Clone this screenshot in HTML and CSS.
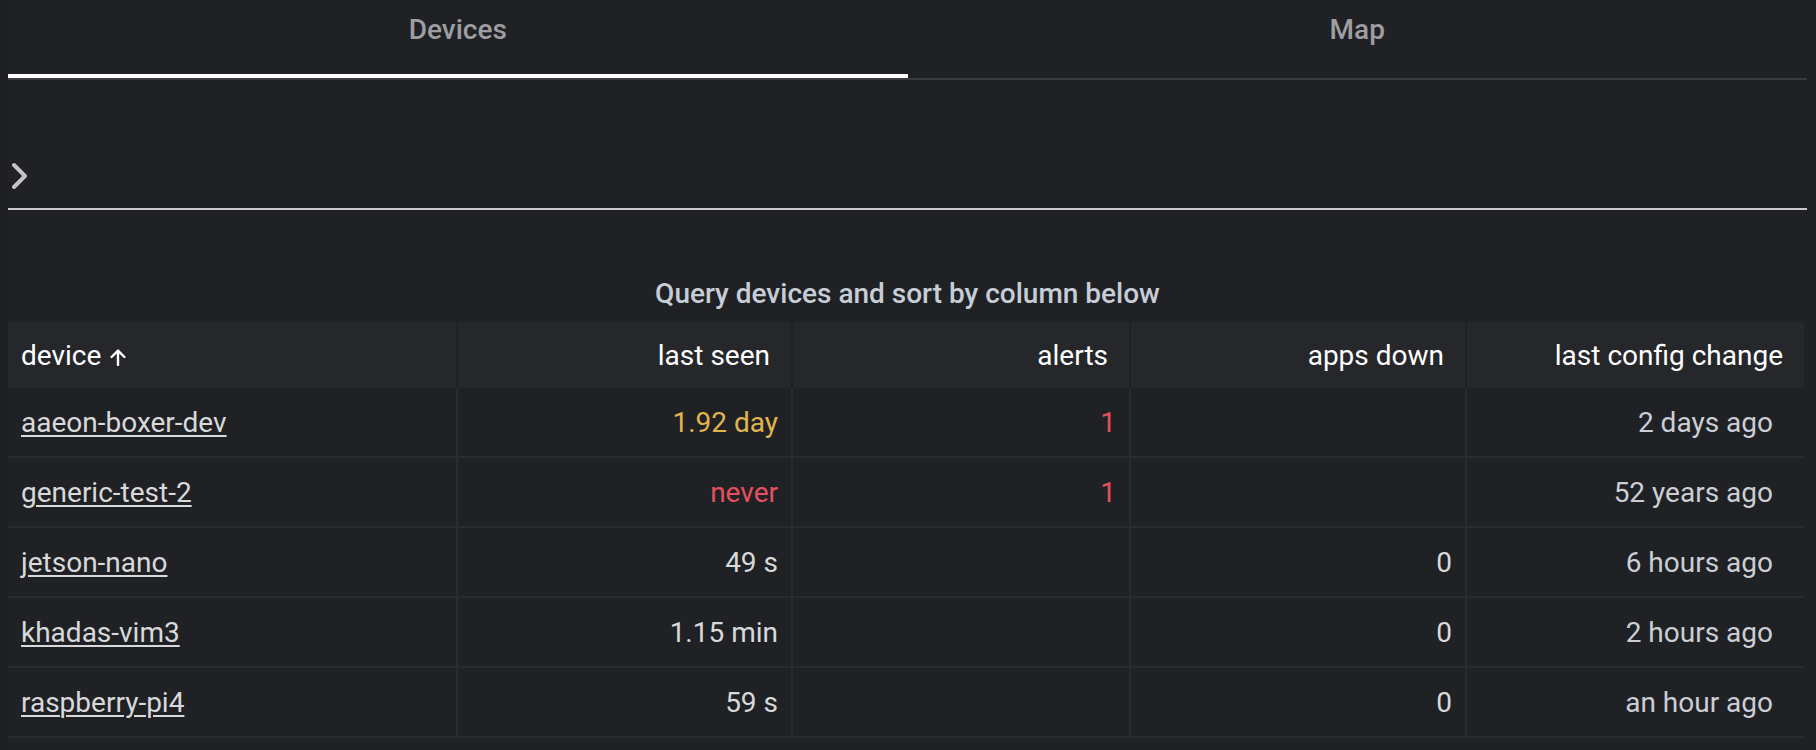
FILE: index.html
```html
<!DOCTYPE html>
<html>
<head>
<meta charset="utf-8">
<link rel="stylesheet" href="styles.css">
</head>
<body>
<div class="page">
  <div class="tabs">
    <div class="tab active">Devices</div>
    <div class="tab">Map</div>
  </div>
  <div class="query-bar">
    <svg class="chevron" width="20" height="30" viewBox="0 0 20 30"><polyline points="5,4 16,15 5,26" fill="none" stroke="#c4c4c6" stroke-width="4" stroke-linecap="round" stroke-linejoin="round"/></svg>
  </div>
  <div class="title">Query devices and sort by column below</div>
  <table class="grid">
    <colgroup>
      <col class="c1"><col class="c2"><col class="c3"><col class="c4"><col class="c5">
    </colgroup>
    <thead>
      <tr>
        <th class="left">device<svg class="sort" width="16" height="17" viewBox="0 0 16 17"><path d="M8 16V1.6M1.6 8L8 1.6 14.4 8" fill="none" stroke="#fff" stroke-width="2.4" stroke-linecap="round" stroke-linejoin="round"/></svg></th>
        <th>last seen</th>
        <th>alerts</th>
        <th>apps down</th>
        <th>last config change</th>
      </tr>
    </thead>
    <tbody>
      <tr>
        <td class="left"><a href="#">aaeon-boxer-dev</a></td>
        <td class="warn">1.92 day</td>
        <td class="crit">1</td>
        <td></td>
        <td class="last">2 days ago</td>
      </tr>
      <tr>
        <td class="left"><a href="#">generic-test-2</a></td>
        <td class="crit">never</td>
        <td class="crit">1</td>
        <td></td>
        <td class="last">52 years ago</td>
      </tr>
      <tr>
        <td class="left"><a href="#">jetson-nano</a></td>
        <td>49 s</td>
        <td></td>
        <td>0</td>
        <td class="last">6 hours ago</td>
      </tr>
      <tr>
        <td class="left"><a href="#">khadas-vim3</a></td>
        <td>1.15 min</td>
        <td></td>
        <td>0</td>
        <td class="last">2 hours ago</td>
      </tr>
      <tr>
        <td class="left"><a href="#">raspberry-pi4</a></td>
        <td>59 s</td>
        <td></td>
        <td>0</td>
        <td class="last">an hour ago</td>
      </tr>
    </tbody>
  </table>
</div>
</body>
</html>
```
FILE: styles.css
```css
html, body {
  margin: 0;
  padding: 0;
  background: #1e1f22;
}
body {
  font-family: Roboto, "Liberation Sans", sans-serif;
  color: #d8d9da;
  height: 750px;
  overflow: hidden;
}
.page {
  margin-left: 8px;
  padding-right: 9px;
  background: #202125;
  height: 750px;
}
.tabs {
  display: flex;
  border-bottom: 2px solid #3a3b3f;
}
.tab {
  flex: 1;
  border-bottom: 4px solid transparent;
  text-align: center;
  font-size: 28px;
  font-weight: 500;
  line-height: 36px;
  padding-top: 12px;
  box-sizing: border-box;
  height: 78px;
  color: #9e9ea2;
}
.tab.active {
  border-bottom-color: #ffffff;
}
.query-bar {
  height: 128px;
  border-bottom: 2px solid #c9c9cb;
  display: flex;
  align-items: flex-start;
}
.chevron {
  display: block;
  margin-top: 81px;
  margin-left: 1px;
}
.title {
  margin-top: 66px;
  line-height: 36px;
  height: 36px;
  text-align: center;
  font-size: 28px;
  font-weight: 500;
  color: #c7cdd6;
}
.grid {
  margin-top: 10px;
  width: 1796px;
  table-layout: fixed;
  border-collapse: separate;
  border-spacing: 0;
  font-size: 28px;
}
.c1 { width: 450px; }
.c2 { width: 335px; }
.c3 { width: 338px; }
.c4 { width: 336px; }
.c5 { width: 337px; }
th {
  height: 66px;
  background: #26272b;
  color: #ffffff;
  font-weight: 400;
  text-align: right;
  padding: 0 21px 0 13px;
  border-right: 2px solid #202125;
  box-sizing: border-box;
  white-space: nowrap;
}
th:last-child {
  border-right: none;
}
th.left, td.left {
  text-align: left;
}
.sort {
  margin-left: 9px;
  vertical-align: -1px;
}
td {
  height: 70px;
  box-sizing: border-box;
  text-align: right;
  padding: 0 13px 0 13px;
  border-right: 2px solid #2a2b2f;
  border-bottom: 2px solid #2a2b2f;
  color: #d8d9da;
  white-space: nowrap;
}
td:last-child {
  border-right: none;
}
td.last {
  padding-right: 31px;
  color: #ccced6;
}
td a {
  color: #d8d9da;
  text-decoration: underline;
  text-underline-offset: 3px;
  text-decoration-thickness: 2px;
}
.warn {
  color: #e0b54d;
}
.crit {
  color: #e4505f;
}
```
